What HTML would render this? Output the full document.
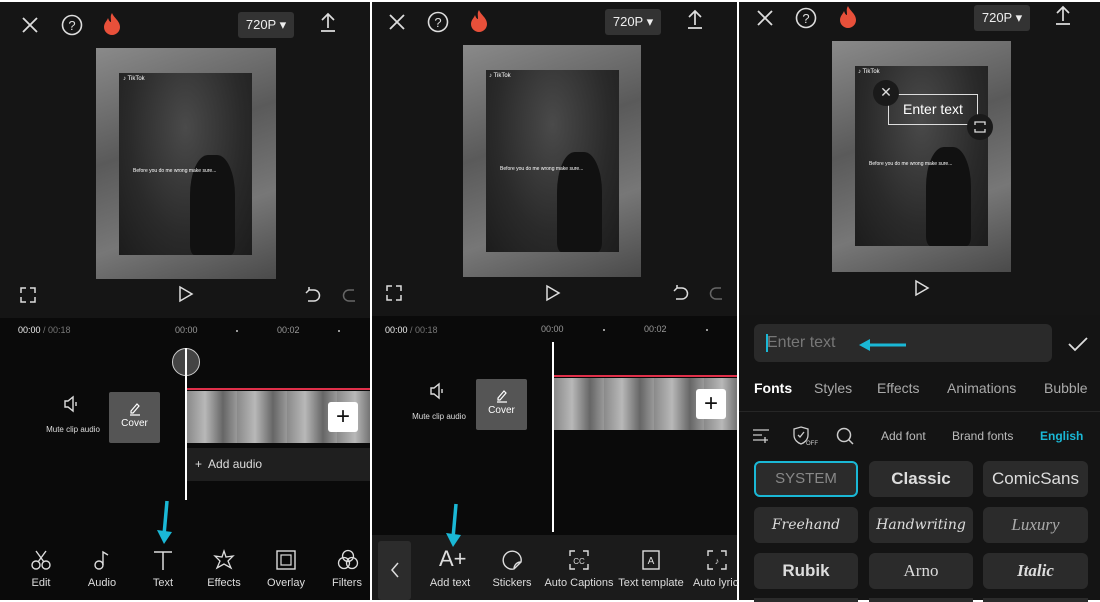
<!DOCTYPE html>
<html><head><meta charset="utf-8"><style>
*{margin:0;padding:0;box-sizing:border-box}
body{width:1100px;height:600px;background:#fff;position:relative;overflow:hidden;font-family:"Liberation Sans",sans-serif;color:#ddd}
.a{position:absolute}
.top{background:#151515}
.tl{background:#0a0a0a}
.vo{background:linear-gradient(160deg,#8a8a8a,#5a5a5a 40%,#777 70%,#4a4a4a)}
.vi{background:radial-gradient(ellipse at 50% 30%,#4a4a4a,#2a2a2a 60%,#1c1c1c)}
.fig{background:#111;border-radius:40% 40% 10% 10%}
.q{width:56px;height:26px;background:#333;border-radius:3px;font-size:13px;color:#eee;text-align:center;line-height:26px}
.t{font-size:9px;color:#bbb}
.clip{background:repeating-linear-gradient(90deg,#8a8a8a 0,#b8b8b8 18px,#666 36px,#999 50px);}
.plus{width:30px;height:30px;background:#fff;border-radius:3px;color:#111;font-size:24px;text-align:center;line-height:29px}
.lab{font-size:11px;color:#ddd;text-align:center;width:70px}
.fb{background:#2b2b2b;border-radius:6px;width:104px;height:36px;text-align:center;line-height:36px;font-size:17px;color:#ddd}
svg{position:absolute;overflow:visible}
</style></head><body>

<!-- PANEL 1 -->
<div class="a top" style="left:0;top:2px;width:370px;height:316px"></div>
<div class="a tl" style="left:0;top:318px;width:370px;height:282px"></div>
<svg style="left:22px;top:17px" width="16" height="16"><path d="M1 1L15 15M15 1L1 15" stroke="#ddd" stroke-width="1.8"/></svg>
<svg style="left:61px;top:14px" width="22" height="22"><circle cx="11" cy="11" r="9.5" fill="none" stroke="#ddd" stroke-width="1.6"/><text x="11" y="16" font-size="13" fill="#ddd" text-anchor="middle" font-family="Liberation Sans">?</text></svg>
<svg style="left:103px;top:12px" width="18" height="24"><path d="M9 1C11 6 17 9 17 15A8 8 0 0 1 1 15C1 11 4 9 5 6C6 9 7 10 8 10C8 6 7 4 9 1Z" fill="#e8503a"/></svg>
<div class="a q" style="left:238px;top:12px">720P ▾</div>
<svg style="left:320px;top:12px" width="16" height="20"><path d="M8 16V2M2 8L8 2L14 8M1 19H15" stroke="#ddd" stroke-width="1.7" fill="none"/></svg>
<div class="a vo" style="left:96px;top:48px;width:180px;height:231px"></div>
<div class="a vi" style="left:119px;top:73px;width:133px;height:182px"></div>
<div class="a fig" style="left:190px;top:155px;width:45px;height:100px"></div>
<div class="a" style="left:123px;top:76px;font-size:6px;color:#fff">♪ TikTok</div>
<div class="a" style="left:133px;top:168px;font-size:5px;color:#fff">Before you do me wrong make sure...</div>
<svg style="left:20px;top:287px" width="16" height="16"><path d="M1 6V1H6M10 1H15V6M15 10V15H10M6 15H1V10" stroke="#ddd" stroke-width="1.5" fill="none"/></svg>
<svg style="left:179px;top:286px" width="14" height="16"><path d="M1 1L13 8L1 15Z" stroke="#ddd" stroke-width="1.5" fill="none"/></svg>
<svg style="left:305px;top:287px" width="16" height="16"><path d="M4 3H9A5 5 0 0 1 9 14H3M4 3L1 6M4 3V0" stroke="#ddd" stroke-width="1.5" fill="none"/></svg>
<svg style="left:342px;top:287px" width="16" height="16"><path d="M12 3H7A5 5 0 0 0 7 14H13" stroke="#666" stroke-width="1.5" fill="none"/></svg>
<div class="a" style="left:18px;top:325px;font-size:9px;color:#eee">00:00 <span style="color:#777">/ 00:18</span></div>
<div class="a t" style="left:175px;top:325px;color:#999">00:00</div>
<div class="a t" style="left:277px;top:325px;color:#999">00:02</div>
<div class="a" style="left:236px;top:330px;width:2px;height:2px;background:#999"></div>
<div class="a" style="left:338px;top:330px;width:2px;height:2px;background:#999"></div>
<div class="a" style="left:172px;top:348px;width:28px;height:28px;border-radius:50%;background:#444;border:1px solid #ccc"></div>
<div class="a" style="left:187px;top:388px;width:183px;height:2px;background:#e0304a"></div>
<div class="a clip" style="left:187px;top:391px;width:183px;height:52px"></div>
<div class="a plus" style="left:328px;top:402px">+</div>
<div class="a" style="left:187px;top:448px;width:183px;height:33px;background:#1f1f1f;font-size:12px;line-height:33px;padding-left:8px;color:#ddd">+&nbsp; Add audio</div>
<div class="a" style="left:109px;top:392px;width:51px;height:51px;background:#555;border-radius:2px;font-size:10px;color:#fff;text-align:center;padding-top:26px">Cover</div>
<svg style="left:129px;top:402px" width="12" height="14"><path d="M2 9L8 2L10 4L4 11H2Z M1 13H11" stroke="#fff" stroke-width="1.2" fill="none"/></svg>
<svg style="left:64px;top:396px" width="16" height="16"><path d="M1 5H4L9 1V15L4 11H1Z M12 6V10" stroke="#ddd" stroke-width="1.4" fill="none"/></svg>
<div class="a" style="left:38px;top:425px;font-size:8px;color:#ddd;width:70px;text-align:center">Mute clip audio</div>
<div class="a" style="left:185px;top:348px;width:2px;height:152px;background:#fff"></div>
<svg style="left:155px;top:500px" width="20" height="46"><path d="M12 1L9 35" stroke="#1ab8d6" stroke-width="3.5"/><path d="M2 30L9 44L17 32Z" fill="#1ab8d6"/></svg>
<svg style="left:31px;top:550px" width="20" height="20"><circle cx="5" cy="15" r="4" stroke="#ddd" fill="none" stroke-width="1.4"/><circle cx="15" cy="15" r="4" stroke="#ddd" fill="none" stroke-width="1.4"/><path d="M7 12L15 1M13 12L5 1" stroke="#ddd" stroke-width="1.4"/></svg>
<svg style="left:94px;top:550px" width="16" height="20"><circle cx="5" cy="15" r="4" stroke="#ddd" fill="none" stroke-width="1.4"/><path d="M9 15V2L14 5" stroke="#ddd" stroke-width="1.4" fill="none"/></svg>
<svg style="left:153px;top:551px" width="20" height="20"><path d="M1 1H19M10 1V19" stroke="#ddd" stroke-width="1.5"/></svg>
<svg style="left:214px;top:550px" width="20" height="20"><path d="M10 1L12 7L19 6L14 11L17 18L10 14L3 18L6 11L1 6L8 7Z" stroke="#ddd" stroke-width="1.3" fill="none"/></svg>
<svg style="left:276px;top:550px" width="20" height="20"><rect x="1" y="1" width="18" height="18" stroke="#ddd" fill="none" stroke-width="1.4"/><rect x="5" y="5" width="10" height="10" stroke="#ddd" fill="none" stroke-width="1.2"/></svg>
<svg style="left:337px;top:549px" width="22" height="22"><circle cx="11" cy="7" r="5.5" stroke="#ddd" fill="none" stroke-width="1.3"/><circle cx="7" cy="14" r="5.5" stroke="#ddd" fill="none" stroke-width="1.3"/><circle cx="15" cy="14" r="5.5" stroke="#ddd" fill="none" stroke-width="1.3"/></svg>
<div class="a lab" style="left:6px;top:577px">Edit</div>
<div class="a lab" style="left:67px;top:577px">Audio</div>
<div class="a lab" style="left:128px;top:577px">Text</div>
<div class="a lab" style="left:189px;top:577px">Effects</div>
<div class="a lab" style="left:251px;top:577px">Overlay</div>
<div class="a lab" style="left:312px;top:577px">Filters</div>

<!-- PANEL 2 -->
<div class="a top" style="left:372px;top:2px;width:365px;height:316px"></div>
<div class="a tl" style="left:372px;top:316px;width:365px;height:219px"></div>
<div class="a" style="left:372px;top:535px;width:365px;height:65px;background:#1b1b1b"></div>
<svg style="left:389px;top:14px" width="16" height="16"><path d="M1 1L15 15M15 1L1 15" stroke="#ddd" stroke-width="1.8"/></svg>
<svg style="left:427px;top:11px" width="22" height="22"><circle cx="11" cy="11" r="9.5" fill="none" stroke="#ddd" stroke-width="1.6"/><text x="11" y="16" font-size="13" fill="#ddd" text-anchor="middle" font-family="Liberation Sans">?</text></svg>
<svg style="left:470px;top:9px" width="18" height="24"><path d="M9 1C11 6 17 9 17 15A8 8 0 0 1 1 15C1 11 4 9 5 6C6 9 7 10 8 10C8 6 7 4 9 1Z" fill="#e8503a"/></svg>
<div class="a q" style="left:605px;top:9px">720P ▾</div>
<svg style="left:687px;top:9px" width="16" height="20"><path d="M8 16V2M2 8L8 2L14 8M1 19H15" stroke="#ddd" stroke-width="1.7" fill="none"/></svg>
<div class="a vo" style="left:463px;top:45px;width:178px;height:232px"></div>
<div class="a vi" style="left:486px;top:70px;width:133px;height:182px"></div>
<div class="a fig" style="left:557px;top:152px;width:45px;height:100px"></div>
<div class="a" style="left:489px;top:73px;font-size:6px;color:#fff">♪ TikTok</div>
<div class="a" style="left:500px;top:166px;font-size:5px;color:#fff">Before you do me wrong make sure...</div>
<svg style="left:386px;top:285px" width="16" height="16"><path d="M1 6V1H6M10 1H15V6M15 10V15H10M6 15H1V10" stroke="#ddd" stroke-width="1.5" fill="none"/></svg>
<svg style="left:546px;top:285px" width="14" height="16"><path d="M1 1L13 8L1 15Z" stroke="#ddd" stroke-width="1.5" fill="none"/></svg>
<svg style="left:673px;top:285px" width="16" height="16"><path d="M4 3H9A5 5 0 0 1 9 14H3M4 3L1 6M4 3V0" stroke="#ddd" stroke-width="1.5" fill="none"/></svg>
<svg style="left:709px;top:285px" width="16" height="16"><path d="M12 3H7A5 5 0 0 0 7 14H13" stroke="#666" stroke-width="1.5" fill="none"/></svg>
<div class="a" style="left:385px;top:325px;font-size:9px;color:#eee">00:00 <span style="color:#777">/ 00:18</span></div>
<div class="a t" style="left:541px;top:324px;color:#999">00:00</div>
<div class="a t" style="left:644px;top:324px;color:#999">00:02</div>
<div class="a" style="left:603px;top:329px;width:2px;height:2px;background:#999"></div>
<div class="a" style="left:706px;top:329px;width:2px;height:2px;background:#999"></div>
<div class="a" style="left:554px;top:375px;width:183px;height:2px;background:#e0304a"></div>
<div class="a clip" style="left:554px;top:378px;width:183px;height:52px"></div>
<div class="a plus" style="left:696px;top:389px">+</div>
<div class="a" style="left:476px;top:379px;width:51px;height:51px;background:#555;border-radius:2px;font-size:10px;color:#fff;text-align:center;padding-top:26px">Cover</div>
<svg style="left:496px;top:389px" width="12" height="14"><path d="M2 9L8 2L10 4L4 11H2Z M1 13H11" stroke="#fff" stroke-width="1.2" fill="none"/></svg>
<svg style="left:430px;top:383px" width="16" height="16"><path d="M1 5H4L9 1V15L4 11H1Z M12 6V10" stroke="#ddd" stroke-width="1.4" fill="none"/></svg>
<div class="a" style="left:404px;top:412px;font-size:8px;color:#ddd;width:70px;text-align:center">Mute clip audio</div>
<div class="a" style="left:552px;top:342px;width:2px;height:190px;background:#fff"></div>
<div class="a" style="left:378px;top:541px;width:33px;height:59px;background:#2c2c2c;border-radius:3px"></div>
<svg style="left:390px;top:562px" width="10" height="16"><path d="M8 1L2 8L8 15" stroke="#ddd" stroke-width="1.5" fill="none"/></svg>
<svg style="left:444px;top:503px" width="20" height="46"><path d="M12 1L9 35" stroke="#1ab8d6" stroke-width="3.5"/><path d="M2 30L9 44L17 32Z" fill="#1ab8d6"/></svg>
<div class="a" style="left:439px;top:546px;font-size:22px;color:#ddd;font-weight:300">A+</div>
<svg style="left:502px;top:550px" width="20" height="20"><path d="M12 19A9 9 0 1 1 19 12Z M12 19C12 15 15 12 19 12" stroke="#ddd" stroke-width="1.4" fill="none"/></svg>
<svg style="left:569px;top:550px" width="20" height="20"><path d="M1 6V1H6M14 1H19V6M19 14V19H14M6 19H1V14" stroke="#ddd" stroke-width="1.4" fill="none"/><text x="10" y="14" font-size="8" fill="#ddd" text-anchor="middle" font-family="Liberation Sans">CC</text></svg>
<svg style="left:640px;top:550px" width="22" height="20"><rect x="3" y="1" width="16" height="18" stroke="#ddd" fill="none" stroke-width="1.4"/><text x="11" y="14" font-size="10" fill="#ddd" text-anchor="middle" font-family="Liberation Sans">A</text></svg>
<svg style="left:707px;top:550px" width="20" height="20"><path d="M1 6V1H6M14 1H19V6M19 14V19H14M6 19H1V14" stroke="#ddd" stroke-width="1.4" fill="none"/><text x="10" y="14" font-size="9" fill="#ddd" text-anchor="middle">♪</text></svg>
<div class="a lab" style="left:415px;top:577px">Add text</div>
<div class="a lab" style="left:477px;top:577px">Stickers</div>
<div class="a lab" style="left:539px;top:577px;width:80px">Auto Captions</div>
<div class="a lab" style="left:616px;top:577px;width:70px">Text template</div>
<div class="a" style="left:693px;top:577px;font-size:11px;color:#ddd;white-space:nowrap">Auto lyric</div>

<!-- PANEL 3 -->
<div class="a top" style="left:739px;top:2px;width:361px;height:313px"></div>
<div class="a" style="left:739px;top:315px;width:361px;height:285px;background:#141414"></div>
<svg style="left:757px;top:10px" width="16" height="16"><path d="M1 1L15 15M15 1L1 15" stroke="#ddd" stroke-width="1.8"/></svg>
<svg style="left:795px;top:7px" width="22" height="22"><circle cx="11" cy="11" r="9.5" fill="none" stroke="#ddd" stroke-width="1.6"/><text x="11" y="16" font-size="13" fill="#ddd" text-anchor="middle" font-family="Liberation Sans">?</text></svg>
<svg style="left:839px;top:5px" width="18" height="24"><path d="M9 1C11 6 17 9 17 15A8 8 0 0 1 1 15C1 11 4 9 5 6C6 9 7 10 8 10C8 6 7 4 9 1Z" fill="#e8503a"/></svg>
<div class="a q" style="left:974px;top:5px">720P ▾</div>
<svg style="left:1055px;top:5px" width="16" height="20"><path d="M8 16V2M2 8L8 2L14 8M1 19H15" stroke="#ddd" stroke-width="1.7" fill="none"/></svg>
<div class="a vo" style="left:832px;top:41px;width:179px;height:231px"></div>
<div class="a vi" style="left:855px;top:66px;width:133px;height:180px"></div>
<div class="a fig" style="left:926px;top:147px;width:45px;height:99px"></div>
<div class="a" style="left:858px;top:69px;font-size:6px;color:#fff">♪ TikTok</div>
<div class="a" style="left:869px;top:161px;font-size:5px;color:#fff">Before you do me wrong make sure...</div>
<div class="a" style="left:888px;top:94px;width:90px;height:31px;border:1px solid #ddd;font-size:14px;color:#fff;text-align:center;line-height:29px">Enter text</div>
<div class="a" style="left:873px;top:80px;width:26px;height:26px;border-radius:50%;background:#1a1a1a;color:#ddd;text-align:center;line-height:25px;font-size:14px">✕</div>
<div class="a" style="left:967px;top:114px;width:26px;height:26px;border-radius:50%;background:#1a1a1a"></div>
<svg style="left:974px;top:121px" width="12" height="12"><path d="M1 4V1H8M11 8V11H4M8 1L11 1V4M1 8V11H4" stroke="#ddd" stroke-width="1.3" fill="none"/></svg>
<svg style="left:915px;top:280px" width="14" height="16"><path d="M1 1L13 8L1 15Z" stroke="#ddd" stroke-width="1.5" fill="none"/></svg>
<div class="a" style="left:754px;top:324px;width:298px;height:38px;background:#2a2a2a;border-radius:6px"></div>
<div class="a" style="left:766px;top:334px;width:2px;height:18px;background:#1ab8d6"></div>
<div class="a" style="left:767px;top:334px;font-size:16px;color:#777">Enter text</div>
<svg style="left:858px;top:339px" width="50" height="12"><path d="M8 6H48" stroke="#1ab8d6" stroke-width="3"/><path d="M1 6L12 0V12Z" fill="#1ab8d6"/></svg>
<svg style="left:1068px;top:337px" width="20" height="14"><path d="M1 7L7 13L19 1" stroke="#ddd" stroke-width="1.8" fill="none"/></svg>
<div class="a" style="left:754px;top:380px;font-size:14px;color:#fff;font-weight:bold">Fonts</div>
<div class="a" style="left:814px;top:380px;font-size:14px;color:#aaa">Styles</div>
<div class="a" style="left:877px;top:380px;font-size:14px;color:#aaa">Effects</div>
<div class="a" style="left:947px;top:380px;font-size:14px;color:#aaa">Animations</div>
<div class="a" style="left:1044px;top:380px;font-size:14px;color:#aaa">Bubble</div>
<div class="a" style="left:739px;top:411px;width:361px;height:1px;background:#262626"></div>
<svg style="left:752px;top:428px" width="18" height="16"><path d="M1 2H17M1 7H10M1 12H10M13 9V15M10 12H16" stroke="#ccc" stroke-width="1.3"/></svg>
<svg style="left:792px;top:426px" width="22" height="20"><path d="M9 1L16 3V9C16 14 12 17 9 18C6 17 2 14 2 9V3Z M6 9L8 11L12 6" stroke="#ccc" stroke-width="1.3" fill="none"/><text x="14" y="19" font-size="6" fill="#ccc">OFF</text></svg>
<svg style="left:836px;top:427px" width="18" height="18"><circle cx="8" cy="8" r="6.5" stroke="#ccc" stroke-width="1.5" fill="none"/><path d="M13 13L17 17" stroke="#ccc" stroke-width="1.5"/></svg>
<div class="a" style="left:881px;top:429px;font-size:12px;color:#bbb">Add font</div>
<div class="a" style="left:952px;top:429px;font-size:12px;color:#bbb">Brand fonts</div>
<div class="a" style="left:1040px;top:429px;font-size:12px;color:#1ab8d6;font-weight:bold">English</div>
<div class="a fb" style="left:754px;top:461px;border:2px solid #1ab8d6;line-height:32px;color:#888;font-size:15px">SYSTEM</div>
<div class="a fb" style="left:869px;top:461px;font-weight:bold">Classic</div>
<div class="a fb" style="left:983px;top:461px;width:105px">ComicSans</div>
<div class="a fb" style="left:754px;top:507px;font-style:italic;font-family:'DejaVu Serif',serif;font-size:14px">Freehand</div>
<div class="a fb" style="left:869px;top:507px;font-style:italic;font-family:'DejaVu Serif',serif;font-size:14px">Handwriting</div>
<div class="a fb" style="left:983px;top:507px;width:105px;font-family:'Liberation Serif',serif;font-style:italic;color:#aaa">Luxury</div>
<div class="a fb" style="left:754px;top:553px;font-weight:bold">Rubik</div>
<div class="a fb" style="left:869px;top:553px;font-family:'Liberation Serif',serif">Arno</div>
<div class="a fb" style="left:983px;top:553px;width:105px;font-family:'Liberation Serif',serif;font-style:italic;font-weight:bold">Italic</div>
<div class="a" style="left:754px;top:598px;width:104px;height:4px;background:#2b2b2b"></div>
<div class="a" style="left:869px;top:598px;width:104px;height:4px;background:#2b2b2b"></div>
<div class="a" style="left:983px;top:598px;width:105px;height:4px;background:#2b2b2b"></div>
</body></html>
